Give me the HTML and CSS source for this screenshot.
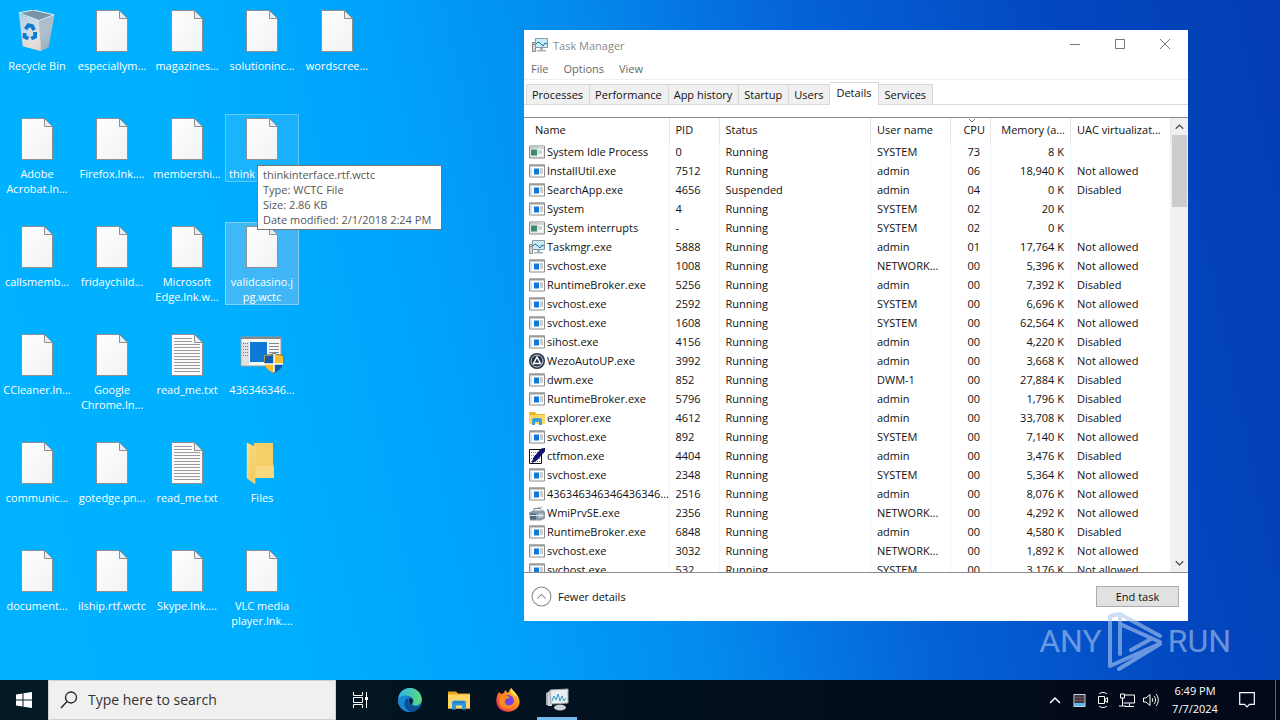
FILE: index.html
```html
<!DOCTYPE html>
<html lang="en">
<head>
<meta charset="utf-8">
<title>Desktop</title>
<link rel="stylesheet" href="styles.css">
</head>
<body>
<svg class="defs" aria-hidden="true">
  <defs>
    <linearGradient id="paper" x1="0" y1="0" x2="1" y2="1"><stop offset="0" stop-color="#fff"/><stop offset="1" stop-color="#f0f2f4"/></linearGradient>
    <linearGradient id="bin" x1="0" y1="0" x2="1" y2="1"><stop offset="0" stop-color="#b4cfe0"/><stop offset=".6" stop-color="#dfe4e8"/><stop offset="1" stop-color="#a3b1bd"/></linearGradient>
    <linearGradient id="fold" x1="0" y1="0" x2="1" y2="1"><stop offset="0" stop-color="#fbe08a"/><stop offset="1" stop-color="#f3c656"/></linearGradient>
    <linearGradient id="edgeA" x1="0" y1="0" x2="1" y2="0"><stop offset="0" stop-color="#2fb4e8"/><stop offset="1" stop-color="#5fdc78"/></linearGradient>
    <linearGradient id="edgeB" x1="0" y1="0" x2="1" y2="1"><stop offset="0" stop-color="#1b9de2"/><stop offset="1" stop-color="#0c59a4"/></linearGradient>
    <linearGradient id="fox" x1="1" y1="0" x2="0" y2="1"><stop offset="0" stop-color="#ffe23c"/><stop offset=".45" stop-color="#ff8a1f"/><stop offset="1" stop-color="#f5195c"/></linearGradient>
  </defs>
  <symbol id="file" viewBox="0 0 32 42"><path d="M.5.5h23l8 8v33H.5z" fill="url(#paper)" stroke="#8f8f8f"/><path d="M23.500.5v8h8z" fill="#e6eef5" stroke="#8f8f8f"/></symbol>
  <symbol id="text" viewBox="0 0 32 42"><path d="M.5.5h23l8 8v33H.5z" fill="#fbfbfb" stroke="#8f8f8f"/><path d="M23.500.5v8h8z" fill="#e6eef5" stroke="#8f8f8f"/><path d="M3 4.500h18M3 7.500h18M3 10.500h26M3 13.500h26M3 16.500h26M3 19.500h26M3 22.500h26M3 25.500h26M3 28.500h26M3 31.500h26M3 34.500h26M3 37.500h26" stroke="#9a9a9a"/></symbol>
  <symbol id="recycle" viewBox="0 0 40 44"><path d="M1 4l4 34 19 5 8-4 6-33-16 5z" fill="url(#bin)"/><path d="M22 11l2 32 8-4 6-33z" fill="#8fa6b7" opacity=".6"/><path d="M1 3l15-3 22 5-16 6z" fill="#7795a8" stroke="#e8f3fa"/><path d="M5 33l19-1v11L6 38z" fill="#e9d9d2" opacity=".7"/><g fill="none" stroke="#1279d0" stroke-width="4"><path d="M8 20l3-4 4 1 2 4"/><path d="M18 23l0 5-4 2"/><path d="M11 30l-4-2 0-4"/></g></symbol>
  <symbol id="setup" viewBox="0 0 44 38"><path d="M1 1h40v29H1z" fill="#f8f8f8" stroke="#9a9a9a"/><path d="M1 1h40v2H1z" fill="#888"/><path d="M2 6h7v23H2z" fill="#e1e1e1"/><path d="M3 7.500h5M3 10.500h5M3 13.500h5M3 16.500h5M3 19.500h5" stroke="#777" stroke-dasharray="1 1"/><path d="M10 6h17v20H10z" fill="#0f78d7"/><path d="M29 7.500h10M29 10.500h10M29 13.500h10M29 16.500h10" stroke="#888"/><path d="M34 17c3 2 6 2 9 2 1 9-2 15-9 18-7-3-11-9-10-18 4 0 7 0 10-2z" fill="#fbbd2c" stroke="#5d6f7b"/><path d="M34 28H24.500c1 4 4 7 9.500 9zM34 18c3 2 6 2 9 2v8h-9z" fill="#fbbd2c"/><path d="M34 18c-3 2-6 2-9 2v8h9zM34 28h9c-1 4-4 7-9 9z" fill="#0d5dae"/><path d="M34 18v18M24 28h19" stroke="#fff" stroke-width="1.500"/></symbol>
  <symbol id="folder" viewBox="0 0 32 42"><path d="M1 1h26v21l1 3v11H8V1z" fill="#f4cf67"/><path d="M10 24h15l2-3 1 15H10z" fill="#f9d980"/><path d="M1 1l8 4v37l-8-6z" fill="url(#fold)" stroke="#f9e3a0" stroke-width=".5"/></symbol>
  <symbol id="exe" viewBox="0 0 16 13"><path d="M.5.500h15v12H.5z" fill="#fff" stroke="#8b8b8b"/><path d="M0 0h16v2H0z" fill="#9b9b9b"/><path d="M1 3h2v9H1z" fill="#d9e2e8"/><path d="M5 4h5v6H5z" fill="#0f78d7"/><path d="M11 4.500h3M11 6.500h3M11 8.500h3" stroke="#9b9b9b"/></symbol>
  <symbol id="sys" viewBox="0 0 16 13"><path d="M.5.500h15v12H.5z" fill="#e9ecec" stroke="#858b8b"/><path d="M1 1h14v2H1z" fill="#c3c9c9"/><path d="M2 4h6v6H2z" fill="#3d8a72"/><path d="M9 4h5v6H9z" fill="#fff"/><path d="M9 5.500h4M9 7.500h4" stroke="#9bb0b0"/><path d="M10 1.500h5" stroke="#fff" stroke-dasharray="1 1"/></symbol>
  <symbol id="tm" viewBox="0 0 16 14"><path d="M.5 4.500h3v9h-3z" fill="#d9d9d9" stroke="#888"/><path d="M1 6.500h2" stroke="#777"/><path d="M3.500.500h12v9h-12z" fill="#c9edf8" stroke="#8b9aa3"/><path d="M4 6l2-2 2 1 3 3 2-3 2 1" fill="none" stroke="#1d7196"/><path d="M8 10h3v2h3v1.500H5V12h3z" fill="#a6b3bb"/></symbol>
  <symbol id="wezo" viewBox="0 0 16 16"><circle cx="8" cy="8" r="8" fill="#273244"/><circle cx="8" cy="8" r="6" fill="none" stroke="#d4dce6"/><path d="M8 4l3.500 6.500h-7z" fill="none" stroke="#fff" stroke-width="1.500"/></symbol>
  <symbol id="explorer" viewBox="0 0 16 14"><path d="M0 1h6l1 2h9v10H0z" fill="#f2b21c"/><path d="M0 4h16v9H0z" fill="#ffd767"/><path d="M3 14V8l2-1h6l2 1v6h-3v-3H6v3z" fill="#3e9fd8"/></symbol>
  <symbol id="ctf" viewBox="0 0 16 16"><path d="M.5 1.500h12v14H.5z" fill="#fff" stroke="#111"/><path d="M2 4.500h9M2 7.500h9M2 10.500h9M2 13.500h9" stroke="#888" stroke-dasharray="1 1"/><path d="M16 0l-4 1-7 8-2 6 5-3 8-9z" fill="#0b1384" stroke="#000" stroke-width=".5"/></symbol>
  <symbol id="wmi" viewBox="0 0 16 15"><path d="M5 6V3h6l2-2M9 1l4 4" fill="none" stroke="#7b858d"/><path d="M0 7l4-2h11l1 2v6l-4 2H1z" fill="#8c9bab"/><path d="M1 8h6v6H1z" fill="#52677d"/><path d="M9 8h5v4H9z" fill="#b9c9d8"/><path d="M1 10h14" stroke="#dae2e9"/></symbol>
  <symbol id="win" viewBox="0 0 16 16"><path d="M0 2.500L6.500 1.500V7.500H0zM7.500 1.300L16 0v7.500H7.500zM0 8.500h6.500v6L0 13.500zM7.500 8.500H16V16l-8.500-1.300z" fill="#fff"/></symbol>
  <symbol id="search" viewBox="0 0 18 18"><circle cx="11" cy="6.500" r="5.500" fill="none" stroke="#222" stroke-width="1.300"/><path d="M7 10.500L1 17" stroke="#222" stroke-width="1.300"/></symbol>
  <symbol id="taskview" viewBox="0 0 18 16"><path d="M1.500 0v3.500h9V0M1.500 16v-3.500h9V16M1.500 5.500h9v5h-9zM14.500 0v16" fill="none" stroke="#fff"/><path d="M13 5h3v3h-3z" fill="#fff"/></symbol>
  <symbol id="edge" viewBox="0 0 24 24"><circle cx="12" cy="12" r="12" fill="url(#edgeB)"/><path d="M1 8C4-2 19-3 23 8c3 8-4 11-9 9 3-3 1-9-4-9-4-1-7 0-9 2z" fill="url(#edgeA)"/><path d="M10 9c-6 2-4 12 3 15C4 24 0 18 0 12c2-4 6-5 10-3z" fill="#1789d2"/><path d="M11 10c-3 5 2 11 11 8-2 3-5 5-9 6-8-3-9-12-2-14z" fill="#0d4d91"/><path d="M12 10c3 0 4 3 2 5-1 2 1 3 4 3-5 1-9-4-6-8z" fill="#062238"/></symbol>
  <symbol id="explorer-lg" viewBox="0 0 22 19"><path d="M0 1h8l2 2h12v15H0z" fill="#e9a51c"/><path d="M0 4h22v14H0z" fill="#ffd665"/><path d="M4 19v-8l2-1h10l2 1v8h-4v-4H8v4z" fill="#2f97df"/><path d="M6 12h10" stroke="#1d73ba"/></symbol>
  <symbol id="firefox" viewBox="0 0 24 24"><path d="M3 4l2 2 3-1 1-3 3 3 3-5 5 6c4 4 5 10 1 14-5 5-13 5-18 0C-1 15 0 8 3 4z" fill="url(#fox)"/><circle cx="12" cy="13" r="6" fill="#7542e5"/><path d="M4 9c4-2 8-2 10 1-4 0-6 2-5 5 2 4 7 3 9-1 0 5-4 7-8 7-6-1-8-6-6-12z" fill="#ff8b1c"/><path d="M15 0c2 3 6 5 7 10-2-3-5-3-7-5z" fill="#ffe14a"/></symbol>
  <symbol id="tm-lg" viewBox="0 0 24 22"><path d="M1 4l5-2v15l-5-1z" fill="#aab0b4"/><path d="M3 3l4-2v16H3z" fill="#d2d7da"/><path d="M5 1l18-1v14L6 15z" fill="#e9eef0" stroke="#9ea7ac"/><path d="M7 12l2-5 2 4 2-6 2 7 2-5 2 5 2-3" fill="none" stroke="#3a9ac4"/><ellipse cx="15" cy="18.500" rx="6" ry="3" fill="#cbd1d4"/></symbol>
  <symbol id="up" viewBox="0 0 12 8"><path d="M1 7l5-5 5 5" fill="none" stroke="currentColor" stroke-width="1.500"/></symbol>
  <symbol id="grid" viewBox="0 0 12 13"><path d="M0 0h12v13H0z" fill="#c9d3da"/><path d="M1 1h10v8H1z" fill="#26323d"/><path d="M1 3.500h10M1 6.500h10M3.500 1v8M6.500 1v8M9.500 1v8" stroke="#9c5c50" stroke-width=".6"/><path d="M1 9h10v3H1z" fill="#5cb8ef"/></symbol>
  <symbol id="cam" viewBox="0 0 12 16"><path d="M1.500 4.500h6v7h-6zM8 7.500l2.500-2v5L8 9z" fill="none" stroke="#fff"/><path d="M2 2c2-2 6-2 8 0M2 14c2 2 6 2 8 0" fill="none" stroke="#fff"/></symbol>
  <symbol id="net" viewBox="0 0 17 15"><path d="M5.500 2.500h10v8H4.500M1.500 1.500h4v4h-4zM3.500 5.500v8M10.500 11v3M6 14h9M0 13.500h7" fill="none" stroke="#fff"/></symbol>
  <symbol id="vol" viewBox="0 0 17 15"><path d="M.5 5.500H3l4-3.500v11L3 9.500H.5zM9 5.500c1 1 1 3 0 4M11 3.500c2 2 2 6 0 8M13 1.500c3 3 3 9 0 12" fill="none" stroke="#fff"/></symbol>
  <symbol id="note" viewBox="0 0 16 16"><path d="M.7.7h14.600v11.600H10.500L8 14.800l-2.500-2.500H.7z" fill="none" stroke="#fff" stroke-width="1.200"/></symbol>
</svg>

<main class="desktop">
  <ul class="icons">
    <li class="item"><svg class="glyph bin"><use href="#recycle"/></svg><span>Recycle Bin</span></li>
    <li class="item"><svg class="glyph"><use href="#file"/></svg><span>Adobe<br>Acrobat.ln...</span></li>
    <li class="item"><svg class="glyph"><use href="#file"/></svg><span>callsmemb...</span></li>
    <li class="item"><svg class="glyph"><use href="#file"/></svg><span>CCleaner.ln...</span></li>
    <li class="item"><svg class="glyph"><use href="#file"/></svg><span>communic...</span></li>
    <li class="item"><svg class="glyph"><use href="#file"/></svg><span>document...</span></li>
    <li class="item"><svg class="glyph"><use href="#file"/></svg><span>especiallym...</span></li>
    <li class="item"><svg class="glyph"><use href="#file"/></svg><span>Firefox.lnk....</span></li>
    <li class="item"><svg class="glyph"><use href="#file"/></svg><span>fridaychild...</span></li>
    <li class="item"><svg class="glyph"><use href="#file"/></svg><span>Google<br>Chrome.ln...</span></li>
    <li class="item"><svg class="glyph"><use href="#file"/></svg><span>gotedge.pn...</span></li>
    <li class="item"><svg class="glyph"><use href="#file"/></svg><span>ilship.rtf.wctc</span></li>
    <li class="item"><svg class="glyph"><use href="#file"/></svg><span>magazines...</span></li>
    <li class="item"><svg class="glyph"><use href="#file"/></svg><span>membershi...</span></li>
    <li class="item"><svg class="glyph"><use href="#file"/></svg><span>Microsoft<br>Edge.lnk.w...</span></li>
    <li class="item"><svg class="glyph"><use href="#text"/></svg><span>read_me.txt</span></li>
    <li class="item"><svg class="glyph"><use href="#text"/></svg><span>read_me.txt</span></li>
    <li class="item"><svg class="glyph"><use href="#file"/></svg><span>Skype.lnk....</span></li>
    <li class="item"><svg class="glyph"><use href="#file"/></svg><span>solutioninc...</span></li>
    <li class="item hover"><svg class="glyph"><use href="#file"/></svg><span class="start">think</span>
      <div class="tooltip" role="tooltip">thinkinterface.rtf.wctc<br>Type: WCTC File<br>Size: 2.86 KB<br>Date modified: 2/1/2018 2:24 PM</div></li>
    <li class="item selected"><svg class="glyph"><use href="#file"/></svg><span>validcasino.j<br>pg.wctc</span></li>
    <li class="item"><svg class="glyph setup"><use href="#setup"/></svg><span>436346346...</span></li>
    <li class="item"><svg class="glyph"><use href="#folder"/></svg><span>Files</span></li>
    <li class="item"><svg class="glyph"><use href="#file"/></svg><span>VLC media<br>player.lnk....</span></li>
    <li class="item"><svg class="glyph"><use href="#file"/></svg><span>wordscree...</span></li>
  </ul>

  <section class="window" aria-label="Task Manager">
    <header class="titlebar">
      <svg class="ico"><use href="#tm"/></svg><h1>Task Manager</h1>
      <button aria-label="Minimize"><svg viewBox="0 0 12 12"><path d="M1 6.500h10"/></svg></button>
      <button aria-label="Maximize"><svg viewBox="0 0 12 12"><path d="M1.500 1.500h9v9h-9z"/></svg></button>
      <button aria-label="Close"><svg viewBox="0 0 12 12"><path d="M1 1l10 10M11 1L1 11"/></svg></button>
    </header>
    <nav class="menu"><button>File</button><button>Options</button><button>View</button></nav>
    <div class="tabs" role="tablist">
      <button role="tab">Processes</button><button role="tab">Performance</button><button role="tab">App history</button><button role="tab">Startup</button><button role="tab">Users</button><button role="tab" class="active" aria-selected="true">Details</button><button role="tab">Services</button>
    </div>
    <div class="view">
      <div class="list">
      <table>
        <colgroup><col class="c-name"><col class="c-pid"><col class="c-status"><col class="c-user"><col class="c-cpu"><col class="c-mem"><col class="c-uac"></colgroup>
        <thead><tr><th>Name</th><th>PID</th><th>Status</th><th>User name</th><th class="num sorted"><svg viewBox="0 0 8 4"><path d="M1 0l3 3 3-3"/></svg>CPU</th><th class="num">Memory (a...</th><th>UAC virtualizat...</th></tr></thead>
        <tbody>
        <tr><td><svg class="ico"><use href="#sys"/></svg>System Idle Process</td><td>0</td><td>Running</td><td>SYSTEM</td><td>73</td><td>8 K</td><td></td></tr>
        <tr><td><svg class="ico"><use href="#exe"/></svg>InstallUtil.exe</td><td>7512</td><td>Running</td><td>admin</td><td>06</td><td>18,940 K</td><td>Not allowed</td></tr>
        <tr><td><svg class="ico"><use href="#exe"/></svg>SearchApp.exe</td><td>4656</td><td>Suspended</td><td>admin</td><td>04</td><td>0 K</td><td>Disabled</td></tr>
        <tr><td><svg class="ico"><use href="#exe"/></svg>System</td><td>4</td><td>Running</td><td>SYSTEM</td><td>02</td><td>20 K</td><td></td></tr>
        <tr><td><svg class="ico"><use href="#sys"/></svg>System interrupts</td><td>-</td><td>Running</td><td>SYSTEM</td><td>02</td><td>0 K</td><td></td></tr>
        <tr><td><svg class="ico"><use href="#tm"/></svg>Taskmgr.exe</td><td>5888</td><td>Running</td><td>admin</td><td>01</td><td>17,764 K</td><td>Not allowed</td></tr>
        <tr><td><svg class="ico"><use href="#exe"/></svg>svchost.exe</td><td>1008</td><td>Running</td><td>NETWORK...</td><td>00</td><td>5,396 K</td><td>Not allowed</td></tr>
        <tr><td><svg class="ico"><use href="#exe"/></svg>RuntimeBroker.exe</td><td>5256</td><td>Running</td><td>admin</td><td>00</td><td>7,392 K</td><td>Disabled</td></tr>
        <tr><td><svg class="ico"><use href="#exe"/></svg>svchost.exe</td><td>2592</td><td>Running</td><td>SYSTEM</td><td>00</td><td>6,696 K</td><td>Not allowed</td></tr>
        <tr><td><svg class="ico"><use href="#exe"/></svg>svchost.exe</td><td>1608</td><td>Running</td><td>SYSTEM</td><td>00</td><td>62,564 K</td><td>Not allowed</td></tr>
        <tr><td><svg class="ico"><use href="#exe"/></svg>sihost.exe</td><td>4156</td><td>Running</td><td>admin</td><td>00</td><td>4,220 K</td><td>Disabled</td></tr>
        <tr><td><svg class="ico"><use href="#wezo"/></svg>WezoAutoUP.exe</td><td>3992</td><td>Running</td><td>admin</td><td>00</td><td>3,668 K</td><td>Not allowed</td></tr>
        <tr><td><svg class="ico"><use href="#exe"/></svg>dwm.exe</td><td>852</td><td>Running</td><td>DWM-1</td><td>00</td><td>27,884 K</td><td>Disabled</td></tr>
        <tr><td><svg class="ico"><use href="#exe"/></svg>RuntimeBroker.exe</td><td>5796</td><td>Running</td><td>admin</td><td>00</td><td>1,796 K</td><td>Disabled</td></tr>
        <tr><td><svg class="ico"><use href="#explorer"/></svg>explorer.exe</td><td>4612</td><td>Running</td><td>admin</td><td>00</td><td>33,708 K</td><td>Disabled</td></tr>
        <tr><td><svg class="ico"><use href="#exe"/></svg>svchost.exe</td><td>892</td><td>Running</td><td>SYSTEM</td><td>00</td><td>7,140 K</td><td>Not allowed</td></tr>
        <tr><td><svg class="ico"><use href="#ctf"/></svg>ctfmon.exe</td><td>4404</td><td>Running</td><td>admin</td><td>00</td><td>3,476 K</td><td>Disabled</td></tr>
        <tr><td><svg class="ico"><use href="#exe"/></svg>svchost.exe</td><td>2348</td><td>Running</td><td>SYSTEM</td><td>00</td><td>5,364 K</td><td>Not allowed</td></tr>
        <tr><td><svg class="ico"><use href="#exe"/></svg>436346346346436346...</td><td>2516</td><td>Running</td><td>admin</td><td>00</td><td>8,076 K</td><td>Not allowed</td></tr>
        <tr><td><svg class="ico"><use href="#wmi"/></svg>WmiPrvSE.exe</td><td>2356</td><td>Running</td><td>NETWORK...</td><td>00</td><td>4,292 K</td><td>Not allowed</td></tr>
        <tr><td><svg class="ico"><use href="#exe"/></svg>RuntimeBroker.exe</td><td>6848</td><td>Running</td><td>admin</td><td>00</td><td>4,580 K</td><td>Disabled</td></tr>
        <tr><td><svg class="ico"><use href="#exe"/></svg>svchost.exe</td><td>3032</td><td>Running</td><td>NETWORK...</td><td>00</td><td>1,892 K</td><td>Not allowed</td></tr>
        <tr><td><svg class="ico"><use href="#exe"/></svg>svchost.exe</td><td>532</td><td>Running</td><td>SYSTEM</td><td>00</td><td>3,176 K</td><td>Not allowed</td></tr>
        </tbody>
      </table>
      </div>
      <div class="scroll"><svg><use href="#up"/></svg><div class="thumb"></div><svg class="down"><use href="#up"/></svg></div>
    </div>
    <footer class="foot">
      <button class="fewer"><svg viewBox="0 0 20 20"><circle cx="10" cy="10" r="9"/><path d="M6 12l4-4 4 4"/></svg>Fewer details</button>
      <button class="end">End task</button>
    </footer>
  </section>

  <div class="watermark">
    <span>ANY</span>
    <svg viewBox="0 0 56 62"><path d="M3 6v50L52 34M13 44V4l40 22M13 14l40 18M12 59l41-25M24 40l20-11M3 6l10-2" fill="none" stroke="currentColor" stroke-width="4" stroke-linejoin="round" stroke-linecap="round"/></svg>
    <span>RUN</span>
  </div>
</main>

<footer class="taskbar">
  <button class="app" aria-label="Start"><svg class="s16"><use href="#win"/></svg></button>
  <label class="search"><svg><use href="#search"/></svg><input type="text" placeholder="Type here to search" aria-label="Type here to search"></label>
  <button class="app" aria-label="Task view"><svg class="s18"><use href="#taskview"/></svg></button>
  <button class="app" aria-label="Edge"><svg class="s24"><use href="#edge"/></svg></button>
  <button class="app" aria-label="File Explorer"><svg class="s22"><use href="#explorer-lg"/></svg></button>
  <button class="app" aria-label="Firefox"><svg class="s24"><use href="#firefox"/></svg></button>
  <button class="app running" aria-label="Task Manager"><svg class="s24"><use href="#tm-lg"/></svg></button>
  <div class="tray">
    <button aria-label="Show hidden icons"><svg class="s12"><use href="#up"/></svg></button>
    <button aria-label="Status"><svg class="s13"><use href="#grid"/></svg></button>
    <button aria-label="Meet Now"><svg class="s16"><use href="#cam"/></svg></button>
    <button aria-label="Network"><svg class="s17"><use href="#net"/></svg></button>
    <button aria-label="Volume"><svg class="s17"><use href="#vol"/></svg></button>
  </div>
  <time class="clock">6:49 PM<br>7/7/2024</time>
  <button class="app action" aria-label="Notifications"><svg class="s16"><use href="#note"/></svg></button>
  <button class="peek" aria-label="Show desktop"></button>
</footer>
</body>
</html>
```
FILE: styles.css
```css
* { box-sizing: border-box; }
body {
  margin: 0;
  height: 100vh;
  display: flex;
  flex-direction: column;
  overflow: hidden;
  font: 11px/15px "Open Sans", "Noto Sans", sans-serif;
  color: #111;
}
button { font: inherit; color: inherit; border: 0; background: none; padding: 0; }
.defs { position: absolute; width: 0; height: 0; }

.desktop {
  position: relative;
  flex: 1;
  min-height: 0;
  background: linear-gradient(78deg, #00b2ff 0%, #00b0ff 20%, #00a2fa 36%, #048bee 50%, #0562d8 66%, #0347bf 84%, #033db4 100%);
}

.icons {
  list-style: none;
  margin: 0;
  padding: 6px 0 0;
  display: grid;
  grid-auto-flow: column;
  grid-template-rows: repeat(6, 108px);
  grid-auto-columns: 75px;
  justify-content: start;
  align-items: start;
}
.item {
  position: relative;
  width: 74px;
  padding-top: 3px;
  display: flex;
  flex-direction: column;
  align-items: center;
  gap: 6px;
  border: 1px solid transparent;
  color: #fff;
  text-align: center;
  white-space: nowrap;
}
.item.hover { background: rgba(255, 255, 255, .1); border-color: rgba(255, 255, 255, .3); }
.item.selected { background: rgba(160, 200, 235, .4); border-color: rgba(190, 225, 250, .55); }
.glyph { width: 32px; height: 42px; flex: none; }
.glyph.bin { width: 40px; }
.glyph.setup { width: 44px; }
.start { align-self: flex-start; padding-left: 3px; }
.tooltip {
  position: absolute;
  z-index: 2;
  left: 31px;
  top: 50px;
  min-width: 185px;
  padding: 1px 5px 2px;
  background: #fff;
  border: 1px solid #767676;
  color: #575757;
  text-align: left;
}

.window {
  position: absolute;
  left: 524px;
  top: 30px;
  width: 664px;
  height: 591px;
  display: flex;
  flex-direction: column;
  background: #fff;
}
.titlebar { display: flex; align-items: center; height: 30px; padding: 0 1px 0 8px; color: #8a8a8a; }
.titlebar h1 { margin: 0 auto 0 5px; font-size: 11px; font-weight: 400; }
.titlebar button { width: 45px; height: 30px; }
.titlebar button svg { width: 12px; height: 12px; fill: none; stroke: #777; }
.ico { width: 16px; height: 16px; flex: none; }
.menu { display: flex; gap: 15px; height: 20px; padding: 0 7px 2px; color: #666; border-bottom: 1px solid #f0f0f0; }
.tabs { display: flex; align-items: flex-end; height: 25px; padding-left: 2px; border-bottom: 1px solid #d9d9d9; }
.tabs button {
  height: 20px;
  padding: 0 6px 0 5px;
  background: #f0f0f0;
  border: 1px solid #d9d9d9;
  border-bottom: 0;
  border-left-width: 0;
}
.tabs button:first-child { border-left-width: 1px; }
.tabs .active { height: 23px; padding: 0 7px 3px 6px; margin-bottom: -1px; background: #fff; }
.view { flex: 1; min-height: 0; display: flex; margin-top: 12px; border-top: 1px solid #8b8b8b; border-bottom: 1px solid #8b8b8b; }
.list { flex: 1; min-width: 0; overflow: hidden; }
table { width: 100%; table-layout: fixed; border-collapse: collapse; }
.c-name { width: 145px; }
.c-pid { width: 50px; }
.c-user { width: 80px; }
.c-cpu { width: 40px; }
.c-mem { width: 80px; }
.c-uac { width: 100px; }
th { height: 24px; padding: 0 5px 2px 6px; text-align: left; font-weight: 400; white-space: nowrap; border-right: 1px solid #e5e5e5; }
th:first-child { padding-left: 11px; }
td { height: 19px; padding: 0 6px; white-space: nowrap; border-right: 1px solid #edf5fb; }
td:first-child { padding: 0 0 0 5px; }
td .ico { vertical-align: -2px; margin: -4px 2px -2px 0; }
td:nth-child(5), td:nth-child(6), .num { text-align: right; }
td:nth-child(5) { padding-right: 10px; }
.sorted { position: relative; }
.sorted svg { position: absolute; top: 1px; left: 17px; width: 8px; height: 4px; fill: none; stroke: #777; }
.scroll { width: 17px; display: flex; flex-direction: column; align-items: center; background: #f0f0f0; color: #444; }
.scroll svg { width: 9px; height: 17px; flex: none; }
.scroll .thumb { width: 15px; height: 72px; background: #cdcdcd; }
.scroll .down { margin-top: auto; transform: rotate(180deg); }
.foot { height: 48px; display: flex; align-items: center; justify-content: space-between; padding: 0 9px 2px 7px; }
.fewer { display: flex; align-items: center; gap: 6px; }
.fewer svg { width: 21px; height: 21px; fill: none; stroke: #8a8a8a; }
.end { width: 83px; height: 21px; background: #e1e1e1; border: 1px solid #adadad; }

.watermark {
  position: absolute;
  right: 49px;
  bottom: 8px;
  display: flex;
  align-items: center;
  gap: 5px;
  color: rgba(175, 200, 238, .6);
  font: 32px/40px "Roboto", sans-serif;
}
.watermark svg { width: 56px; height: 62px; }

.taskbar { height: 40px; flex: none; display: flex; background: linear-gradient(90deg, #031a25, #030f1e 60%, #020817); color: #fff; }
.app { width: 49px; display: flex; align-items: center; justify-content: center; }
.app:first-child { width: 48px; }
.running { background: linear-gradient(0deg, #76b9ed 3px, transparent 3px) center / 40px 100% no-repeat; }
.search { width: 288px; display: flex; align-items: center; gap: 10px; padding-left: 11px; background: #f0f0f0; border: 1px solid #d0d0d0; }
.search svg { width: 18px; height: 18px; flex: none; }
.search input { flex: 1; min-width: 0; border: 0; background: none; outline: 0; padding: 0; font: 14px/20px "Open Sans", "Noto Sans", sans-serif; }
.search input::placeholder { color: #333; opacity: 1; }
.s12 { width: 12px; height: 8px; }
.s13 { width: 13px; height: 13px; }
.s16 { width: 16px; height: 16px; }
.s17 { width: 17px; height: 16px; }
.s18 { width: 18px; height: 16px; }
.s22 { width: 22px; height: 20px; }
.s24 { width: 24px; height: 24px; }
.tray { margin-left: auto; display: flex; }
.tray button { width: 24px; display: flex; align-items: center; justify-content: center; }
.clock { width: 64px; text-align: center; font-size: 11px; line-height: 18px; padding-top: 2px; }
.action { width: 40px; margin-right: 8px; }
.peek { width: 5px; border-left: 1px solid #5b6470; }
```
